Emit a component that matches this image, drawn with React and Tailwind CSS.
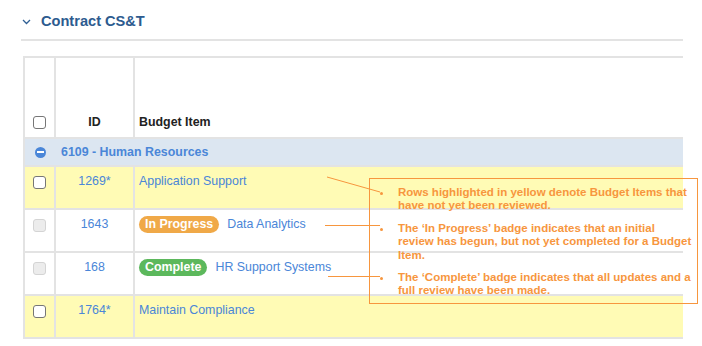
import React from "react";

const rows = [
  { id: "1269*", name: "Application Support", yellow: true },
  { id: "1643", name: "Data Analytics", badge: "progress", disabled: true },
  { id: "168", name: "HR Support Systems", badge: "complete", disabled: true },
  { id: "1764*", name: "Maintain Compliance", yellow: true },
];

const notes = [
  "Rows highlighted in yellow denote Budget Items that have not yet been reviewed.",
  "The \u2018In Progress\u2019 badge indicates that an initial review has begun, but not yet completed for a Budget Item.",
  "The \u2018Complete\u2019 badge indicates that all updates and a full review have been made.",
];

const Checkbox = ({ disabled }) => (
  <span
    className={`inline-block w-[13px] h-[13px] rounded-[3px] border ${
      disabled ? "border-[#d4d4d4] bg-[#ececec]" : "border-[#767676] bg-white"
    }`}
  />
);

const App = () => {
  return (
    <div className="relative w-[702px] h-[346px] bg-white font-['Liberation_Sans',Arial,sans-serif] text-[12.4px] leading-[18px]">
      <div className="pl-[21px] w-[683px]">
        {/* Section header */}
        <div className="flex items-center h-[41px] pt-[3px] border-b-2 border-[#e3e3e3] pl-[1px]">
          <svg width="9" height="6" viewBox="0 0 9 6" className="mt-[1px]">
            <path d="M1 1l3.5 3.5L8 1" fill="none" stroke="#2f5f94" strokeWidth="1.3" />
          </svg>
          <span className="ml-[10px] text-[14.6px] font-bold text-[#2d5b8f]">
            Contract CS&amp;T
          </span>
        </div>

        {/* Table */}
        <div className="mt-[15px] ml-[2px] border-l-2 border-t-2 border-[#e3e3e3]">
          <div className="flex h-[81px] border-b-2 border-[#e3e3e3]">
            <div className="w-[31px] flex items-end justify-center pb-[8px] border-r-2 border-[#e3e3e3]">
              <Checkbox />
            </div>
            <div className="w-[79px] flex items-end justify-center pb-[6px] border-r-2 border-[#e3e3e3] font-bold text-[#222]">
              ID
            </div>
            <div className="flex-1 flex items-end pl-[4px] pb-[6px] font-bold text-[#222]">
              Budget Item
            </div>
          </div>

          <div className="flex items-center h-[28px] bg-[#dce6f1] border-b-2 border-[#e3e3e3]">
            <div className="w-[31px] flex justify-center">
              <span className="w-[11px] h-[11px] rounded-full bg-[#4a86d8] flex items-center justify-center">
                <span className="w-[7px] h-[2px] bg-white" />
              </span>
            </div>
            <span className="pl-[5px] font-bold text-[#4a86d8]">6109 - Human Resources</span>
          </div>

          {rows.map((r) => (
            <div
              key={r.id}
              className={`flex h-[43px] border-b-2 border-[#e3e3e3] ${
                r.yellow ? "bg-[#fffbb5]" : "bg-white"
              }`}
            >
              <div className="w-[31px] flex justify-center pt-[9px] border-r-2 border-[#e3e3e3]">
                <Checkbox disabled={r.disabled} />
              </div>
              <div className="w-[79px] text-center pt-[5px] border-r-2 border-[#e3e3e3] text-[#4a86d8]">
                {r.id}
              </div>
              <div className="flex-1 flex items-start pl-[4px] pt-[5px] text-[#4a86d8]">
                {r.badge === "progress" && (
                  <span className="mr-[8px] mt-[1px] px-[6px] h-[17px] leading-[17px] rounded-full bg-[#f0a948] text-white font-bold">
                    In Progress
                  </span>
                )}
                {r.badge === "complete" && (
                  <span className="mr-[8px] mt-[1px] px-[6px] h-[17px] leading-[17px] rounded-full bg-[#5cb85c] text-white font-bold">
                    Complete
                  </span>
                )}
                <span>{r.name}</span>
              </div>
            </div>
          ))}
        </div>
      </div>

      {/* Callout lines */}
      <svg className="absolute left-0 top-0" width="702" height="346">
        <g stroke="#f7963e" strokeWidth="1">
          <line x1="327" y1="177" x2="380" y2="192" />
          <line x1="325" y1="225.5" x2="380" y2="225.5" />
          <line x1="328" y1="276.5" x2="380" y2="276.5" />
        </g>
      </svg>

      {/* Callout box */}
      <div className="absolute left-[369px] top-[178px] w-[329px] h-[126px] border border-[#f7963e] pt-[7px] pl-[9px] pr-[4px] text-[11.5px] leading-[13.4px] font-bold text-[#f7963e] flex flex-col gap-[9px]">
        {notes.map((n) => (
          <div key={n} className="flex">
            <span className="w-[19px] shrink-0 flex pt-[6px] pl-[1px]">
              <span className="w-[3px] h-[3px] rounded-full bg-[#f7963e]" />
            </span>
            <span>{n}</span>
          </div>
        ))}
      </div>
    </div>
  );
};

export default App;
